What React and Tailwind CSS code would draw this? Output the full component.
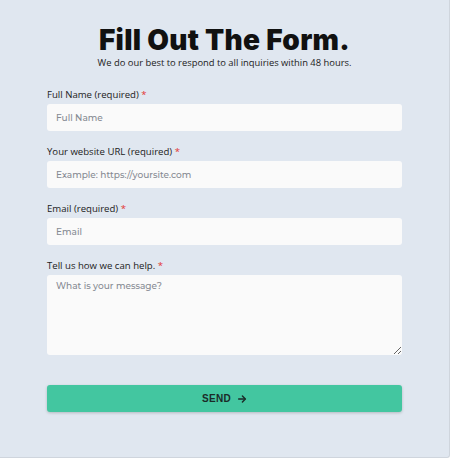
import React from 'react';

function Field({ label, placeholder, multiline }) {
  return (
    <div className="flex flex-col">
      <label className="text-[9.6px] leading-[12px] text-[#222] mb-[3px] font-['Open_Sans',sans-serif]">
        {label} <span className="text-[#e3342f]">*</span>
      </label>
      {multiline ? (
        <textarea
          placeholder={placeholder}
          className="h-[80px] w-full rounded-[3px] bg-[#fafafa] px-[9px] py-[4px] text-[9px] font-medium font-['Montserrat','Inter',sans-serif] placeholder-[#868a93] outline-none"
        />
      ) : (
        <input
          type="text"
          placeholder={placeholder}
          className="h-[27px] w-full rounded-[3px] bg-[#fafafa] px-[9px] text-[9px] font-medium font-['Montserrat','Inter',sans-serif] placeholder-[#868a93] outline-none"
        />
      )}
    </div>
  );
}

export default function App() {
  return (
    <div className="h-[458px] w-[450px] bg-[#e0e7f0] border-r border-b border-[#cfd5dd] rounded-br-[3px]">
      <div className="px-[47px] pt-[23px]">
        <h1 className="text-center text-[28px] leading-[34px] font-black tracking-[0.3px] text-[#111] font-['Inter',sans-serif]">
          Fill Out The Form.
        </h1>
        <p className="text-center text-[9.4px] leading-[12px] text-[#222] font-['Open_Sans',sans-serif]">
          We do our best to respond to all inquiries within 48 hours.
        </p>

        <div className="mt-[20px] flex flex-col gap-[15px]">
          <Field label="Full Name (required)" placeholder="Full Name" />
          <Field label="Your website URL (required)" placeholder="Example: https://yoursite.com" />
          <Field label="Email (required)" placeholder="Email" />
          <Field label="Tell us how we can help." placeholder="What is your message?" multiline />
        </div>

        <button className="mt-[30px] flex h-[27px] w-full items-center justify-center gap-[6px] rounded-[3px] bg-[#43c6a0] shadow-[0_1px_3px_rgba(0,0,0,0.2)] text-[10px] font-bold tracking-[0.3px] text-[#1b2b28] font-['Liberation_Sans',Arial,sans-serif]">
          SEND
          <svg width="10" height="10" viewBox="0 0 24 24" fill="none" stroke="currentColor" strokeWidth="3.5" strokeLinecap="round" strokeLinejoin="round">
            <path d="M4 12h15" />
            <path d="M13 5l7 7-7 7" />
          </svg>
        </button>
      </div>
    </div>
  );
}
